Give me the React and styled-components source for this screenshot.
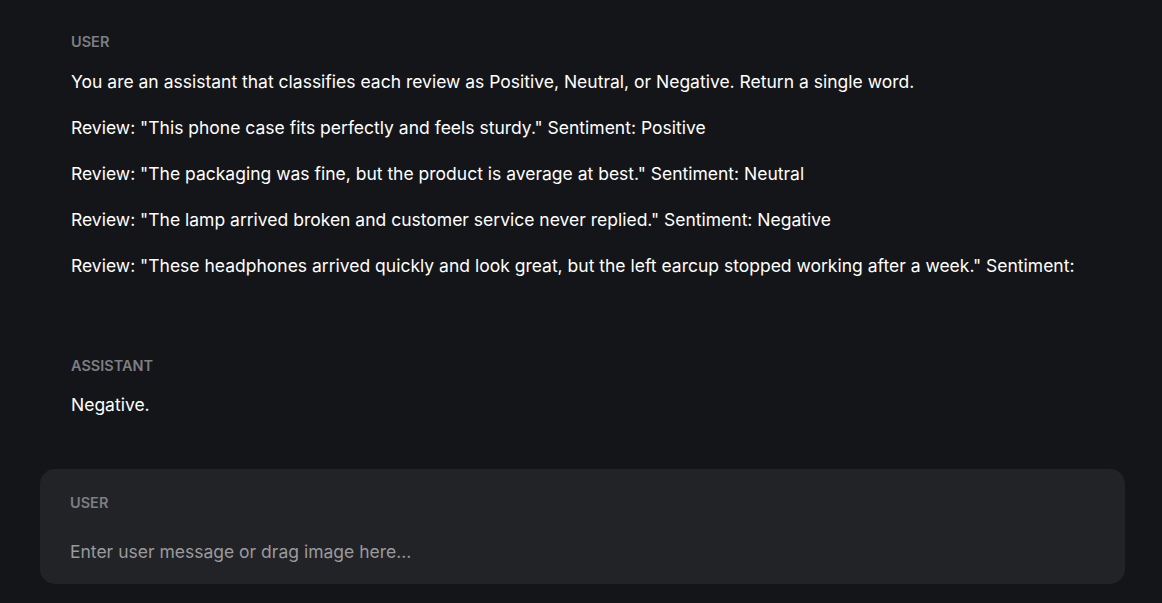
import React from "react";
import styled, { createGlobalStyle } from "styled-components";

const Global = createGlobalStyle`
  html, body { margin: 0; padding: 0; background: #141519; }
  body { font-family: Inter, "Noto Sans", sans-serif; color: #ffffff; -webkit-font-smoothing: antialiased; }
  * { box-sizing: border-box; }
`;

const Page = styled.div`
  width: 1162px;
  height: 603px;
  overflow: hidden;
  background: #141519;
  display: flex;
  flex-direction: column;
  padding: 32px 37px 0 40px;
`;

const Message = styled.section`
  padding-left: 31px;
  display: flex;
  flex-direction: column;
  margin-bottom: ${(p) => p.$after || 0}px;
`;

const Role = styled.div`
  font-size: 14.5px;
  line-height: 20px;
  font-weight: 600;
  color: #7d7e83;
  margin-bottom: ${(p) => (p.$gap != null ? p.$gap : 18)}px;
`;

const Para = styled.p`
  margin: 0 0 22px 0;
  font-size: 17.5px;
  line-height: 24px;
  color: #ffffff;
  &:last-child { margin-bottom: 0; }
`;

const Composer = styled.div`
  background: #222327;
  border-radius: 15px;
  padding: 24px 30px 20px 30px;
  display: flex;
  flex-direction: column;
  height: 115px;
`;

const Input = styled.input`
  background: transparent;
  border: none;
  outline: none;
  padding: 0;
  font-family: Inter, "Noto Sans", sans-serif;
  font-size: 17.5px;
  line-height: 24px;
  height: 24px;
  color: #ffffff;
  &::placeholder { color: #9a9a9d; }
`;

export default function App() {
  return (
    <>
      <Global />
      <Page>
        <Message $after={78}>
          <Role>USER</Role>
          <Para>You are an assistant that classifies each review as Positive, Neutral, or Negative. Return a single word.</Para>
          <Para>Review: "This phone case fits perfectly and feels sturdy." Sentiment: Positive</Para>
          <Para>Review: "The packaging was fine, but the product is average at best." Sentiment: Neutral</Para>
          <Para>Review: "The lamp arrived broken and customer service never replied." Sentiment: Negative</Para>
          <Para>Review: "These headphones arrived quickly and look great, but the left earcup stopped working after a week." Sentiment:</Para>
        </Message>
        <Message $after={52}>
          <Role $gap={17}>ASSISTANT</Role>
          <Para>Negative.</Para>
        </Message>
        <Composer>
          <Role $gap={27}>USER</Role>
          <Input placeholder="Enter user message or drag image here..." />
        </Composer>
      </Page>
    </>
  );
}
